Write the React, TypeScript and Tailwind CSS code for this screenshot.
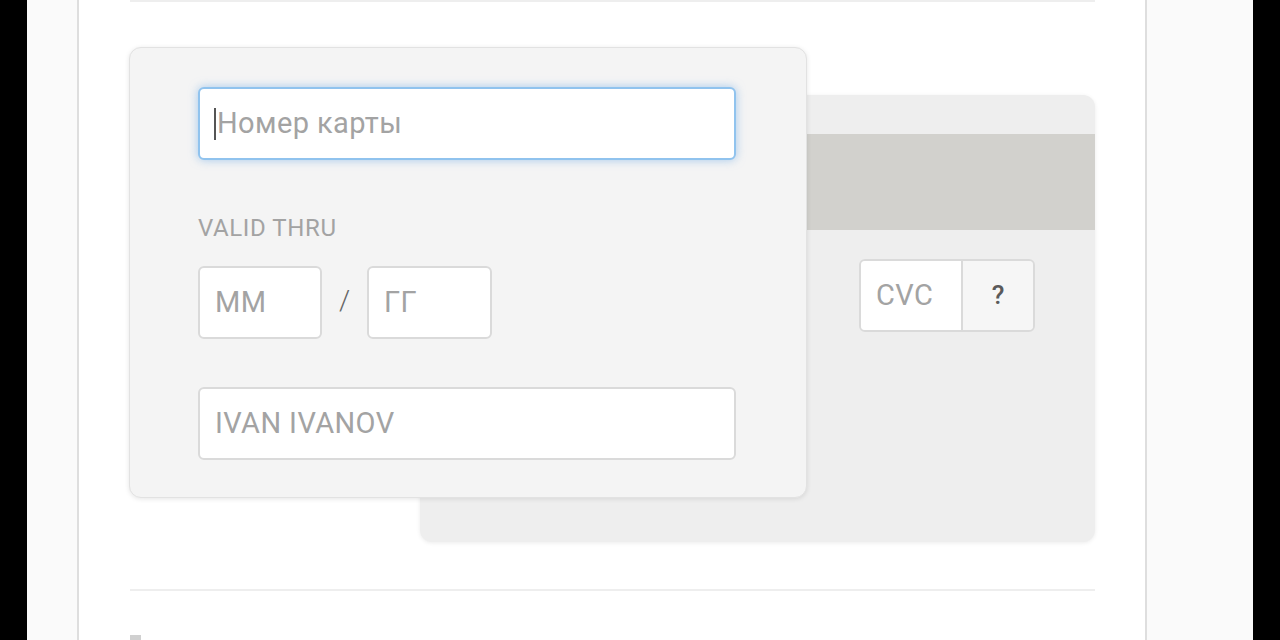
import React from "react";

const font = { fontFamily: "Roboto, 'Noto Sans', sans-serif" };

function Field({ text, className = "" }: { text: string; className?: string }) {
  return (
    <div
      className={
        "h-[73px] bg-white border-2 border-[#dadada] rounded-[6px] flex items-center pl-[15px] text-[29px] tracking-[0.4px] text-[#a3a3a3] " +
        className
      }
    >
      {text}
    </div>
  );
}

export default function App() {
  return (
    <div className="w-[1280px] h-[640px] overflow-hidden bg-black flex" style={font}>
      <div className="ml-[27px] w-[1226px] h-full bg-[#fafafa] flex">
        <div className="ml-[50px] w-[1070px] h-full bg-white border-x-2 border-[#dedede]">
          <div className="pl-[50px] pr-[50px]">
            <div className="ml-[1px] h-[2px] bg-[#eeeeee]" />

            <div className="relative mt-[45px] h-[495px]">
              {/* back of card */}
              <div className="absolute left-[291px] top-[48px] w-[675px] h-[447px] bg-[#eeeeee] rounded-[12px] shadow-[0_1px_4px_rgba(0,0,0,0.08)] overflow-hidden">
                <div className="mt-[39px] h-[96px] bg-[#d2d1cd]" />
                <div className="mt-[29px] ml-[439px] w-[176px] h-[73px] flex border-2 border-[#dadada] rounded-[6px] overflow-hidden">
                  <div className="w-[100px] bg-white flex items-center pl-[15px] text-[29px] tracking-[0.4px] text-[#a3a3a3]">
                    CVC
                  </div>
                  <div className="flex-1 border-l-2 border-[#dadada] bg-[#f6f6f6] flex items-center justify-center text-[26px] font-medium text-[#5a5a5a]">
                    ?
                  </div>
                </div>
              </div>

              {/* front of card */}
              <div className="relative z-10 w-[678px] h-[451px] bg-[#f4f4f4] border border-[#e2e2e2] rounded-[12px] shadow-[0_1px_5px_rgba(0,0,0,0.1)] pl-[68px] pt-[39px]">
                <div className="w-[538px] h-[73px] bg-white border-2 border-[#90c3ee] rounded-[6px] shadow-[0_0_10px_rgba(110,170,230,0.6)] flex items-center pl-[14px] text-[29px] tracking-[0.4px] text-[#a3a3a3]">
                  <span className="w-[2px] h-[32px] bg-[#555] mr-[1px]" />
                  Номер карты
                </div>

                <div className="mt-[56px] text-[24px] tracking-[0.6px] leading-none text-[#a3a3a3] uppercase">
                  Valid thru
                </div>

                <div className="mt-[26px] flex items-center">
                  <Field text="MM" className="w-[124px]" />
                  <div className="w-[45px] text-center text-[28px] font-light text-[#666] -mt-[4px]">/</div>
                  <Field text="ГГ" className="w-[125px]" />
                </div>

                <Field text="IVAN IVANOV" className="mt-[48px] w-[538px]" />
              </div>
            </div>

            <div className="mt-[47px] ml-[1px] h-[2px] bg-[#eeeeee]" />
            <div className="mt-[44px] ml-[1px] w-[11px] h-[8px] bg-[#d0d0d0]" />
          </div>
        </div>
      </div>
    </div>
  );
}
